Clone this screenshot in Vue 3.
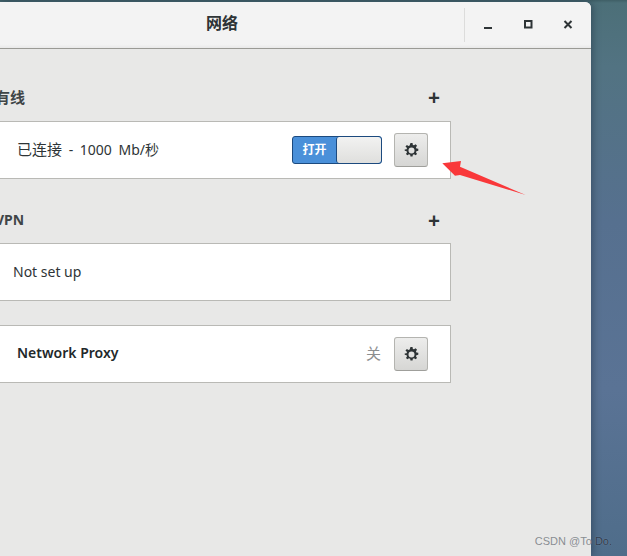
<script setup>
const gearPath = 'M6.9 0h2.2l.35 2 1.25.5 1.65-1.15 1.55 1.55-1.15 1.65.5 1.25 2 .35v2.2l-2 .35-.5 1.25 1.15 1.65-1.55 1.55-1.65-1.15-1.25.5-.35 2H6.9l-.35-2-1.25-.5-1.65 1.15-1.55-1.55 1.15-1.65-.5-1.25-2-.35V6.9l2-.35.5-1.25L1.55 3.65 3.1 2.1l1.65 1.15L6 2.75zM8 4.8a3.2 3.2 0 1 0 0 6.4 3.2 3.2 0 0 0 0-6.4z'
</script>

<template>
  <div class="desktop">
    <div class="window">
      <header class="titlebar">
        <div class="title">网络</div>
        <div class="controls">
          <button class="ctl" aria-label="最小化">
            <svg width="12" height="12" viewBox="0 0 12 12"><rect x="2" y="8" width="8" height="2" fill="#2e3436" /></svg>
          </button>
          <button class="ctl" aria-label="最大化">
            <svg width="12" height="12" viewBox="0 0 12 12"><rect x="3" y="2" width="6.5" height="6.5" fill="none" stroke="#2e3436" stroke-width="2" /></svg>
          </button>
          <button class="ctl" aria-label="关闭">
            <svg width="12" height="12" viewBox="0 0 12 12"><path d="M2.5 2l7 7M9.5 2l-7 7" fill="none" stroke="#2e3436" stroke-width="2" /></svg>
          </button>
        </div>
      </header>

      <main class="content">
        <section class="section">
          <div class="section-head wired">
            <h2>有线</h2>
            <span class="plus">+</span>
          </div>
          <div class="card">
            <span class="status"><span class="cjk">已连接</span> - 1000 Mb/秒</span>
            <div class="actions">
              <div class="switch">
                <span class="on">打开</span>
                <span class="knob"></span>
              </div>
              <button class="gear" aria-label="设置">
                <svg width="15" height="15" viewBox="0 0 16 16"><path :d="gearPath" fill="#2e3436" fill-rule="evenodd" /></svg>
              </button>
            </div>
          </div>
        </section>

        <section class="section vpn">
          <div class="section-head">
            <h2>VPN</h2>
            <span class="plus">+</span>
          </div>
          <div class="card">
            <span class="notset">Not set up</span>
          </div>
        </section>

        <div class="card proxy">
          <span class="proxy-name">Network Proxy</span>
          <div class="actions">
            <span class="off">关</span>
            <button class="gear" aria-label="设置">
              <svg width="15" height="15" viewBox="0 0 16 16"><path :d="gearPath" fill="#2e3436" fill-rule="evenodd" /></svg>
            </button>
          </div>
        </div>
      </main>
    </div>

    <svg class="arrow" width="90" height="46" viewBox="0 0 90 46">
      <path d="M0.3 3.3L19 1L18 6.7L83.7 35L18 15L13 15.7z" fill="#f9383a" />
    </svg>
    <span class="watermark">CSDN @To <span class="wm-dark">Do.</span></span>
  </div>
</template>

<style>
html, body { margin: 0; padding: 0; }
</style>

<style scoped>
.desktop {
  position: relative;
  width: 627px;
  height: 556px;
  overflow: hidden;
  padding-top: 2px;
  box-sizing: border-box;
  background: linear-gradient(180deg, #3f5f66 0, #4c6f78 3px, #527382 12%, #56708f 40%, #5a7395 70%, #4f6d8a 100%);
  font-family: "Noto Sans", "Noto Sans CJK SC", sans-serif;
  color: #2e3436;
}
.window {
  width: 591px;
  height: 554px;
  border-top-right-radius: 6px;
  overflow: hidden;
  background: #e8e8e7;
  display: flex;
  flex-direction: column;
  box-shadow: 1px 0 8px rgba(25, 40, 60, 0.55);
}
.titlebar {
  position: relative;
  height: 47px;
  flex: none;
  box-sizing: border-box;
  background: linear-gradient(180deg, #f3f3f3 0%, #f3f3f3 92%, #e9e9e9 100%);
  border-bottom: 1px solid #9a9a95;
  display: flex;
  align-items: center;
  justify-content: flex-end;
}
.title {
  position: absolute;
  left: 206px;
  top: 10px;
  font-size: 16px;
  line-height: 22px;
  font-weight: 700;
}
.controls {
  display: flex;
  align-self: flex-start;
  height: 34px;
  margin-top: 6px;
  margin-right: 3px;
  padding-left: 3px;
  border-left: 1px solid #dcdcdb;
}
.ctl {
  width: 40px;
  height: 34px;
  padding: 0;
  border: 0;
  background: none;
  display: flex;
  align-items: center;
  justify-content: center;
}
.content {
  width: 451px;
  padding-top: 35px;
}
.section-head {
  height: 26px;
  margin-bottom: 10px;
  display: flex;
  align-items: center;
  justify-content: space-between;
}
.section-head.wired { margin-bottom: 11px; }
.section-head.wired h2 { font-size: 15px; }
.section-head h2 {
  margin: 0 0 0 -5px;
  font-size: 14px;
  line-height: 24px;
  font-weight: 700;
  color: #3f4547;
}
.plus {
  width: 34px;
  text-align: center;
  font-size: 21px;
  line-height: 24px;
  font-weight: 700;
  color: #2e3436;
}
.vpn { margin-top: 28px; }
.card {
  height: 58px;
  box-sizing: border-box;
  background: #fff;
  border: 1px solid #b9b9b5;
  border-left: 0;
  display: flex;
  align-items: center;
  justify-content: space-between;
  padding: 0 22px 0 17px;
}
.status {
  margin-bottom: 3px;
  font-size: 14px;
  color: #2e3436;
  word-spacing: 3px;
}
.cjk { font-size: 15px; }
.actions {
  display: flex;
  align-items: center;
  gap: 12px;
}
.switch {
  width: 90px;
  height: 28px;
  box-sizing: border-box;
  border: 1px solid #1c4a7e;
  border-radius: 3px;
  background: #4a90d9;
  display: flex;
  overflow: hidden;
}
.on {
  width: 43px;
  text-align: center;
  font-size: 12px;
  line-height: 25px;
  font-weight: 700;
  color: #fff;
}
.knob {
  flex: 1;
  border-left: 1px solid #1c4a7e;
  border-radius: 3px;
  background: linear-gradient(180deg, #f2f2f1, #dfdfdd);
}
.gear {
  width: 34px;
  height: 34px;
  padding: 0;
  border: 1px solid #b4b4b0;
  border-bottom-color: #9f9f9b;
  border-radius: 3px;
  background: linear-gradient(180deg, #ededec, #d6d6d4);
  display: flex;
  align-items: center;
  justify-content: center;
}
.notset {
  margin-left: -4px;
  margin-bottom: 1px;
  font-size: 14px;
  color: #2e3436;
}
.proxy { margin-top: 24px; }
.proxy-name {
  margin-bottom: 3px;
  font-size: 14px;
  font-weight: 600;
  color: #22282a;
}
.off {
  margin-bottom: 3px;
  margin-right: 1px;
  font-size: 15px;
  color: #8b8e8f;
}
.arrow {
  position: absolute;
  left: 442px;
  top: 160px;
}
.watermark {
  position: absolute;
  right: 15px;
  top: 534px;
  font-family: "Liberation Sans", sans-serif;
  font-size: 11px;
  line-height: 14px;
  color: rgba(125, 130, 135, 0.9);
}
.wm-dark {
  color: #2c3a4c;
  text-shadow: 0 0 1px rgba(255, 255, 255, 0.35);
}
</style>
